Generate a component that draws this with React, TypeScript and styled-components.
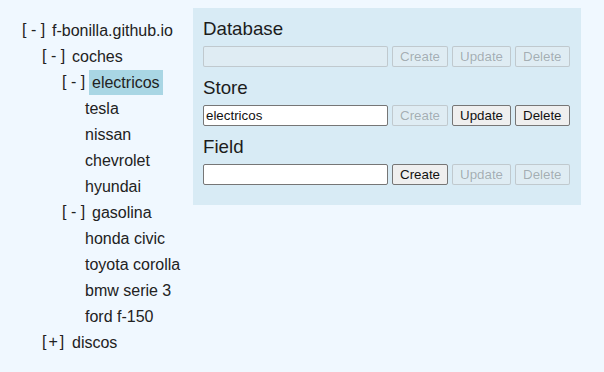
import styled, { createGlobalStyle } from 'styled-components';

interface TreeNode {
  name: string;
  open?: boolean;
  children?: TreeNode[];
}

const tree: TreeNode = {
  name: 'f-bonilla.github.io',
  open: true,
  children: [
    {
      name: 'coches',
      open: true,
      children: [
        {
          name: 'electricos',
          open: true,
          children: [{ name: 'tesla' }, { name: 'nissan' }, { name: 'chevrolet' }, { name: 'hyundai' }],
        },
        {
          name: 'gasolina',
          open: true,
          children: [
            { name: 'honda civic' },
            { name: 'toyota corolla' },
            { name: 'bmw serie 3' },
            { name: 'ford f-150' },
          ],
        },
      ],
    },
    { name: 'discos', open: false, children: [] },
  ],
};

const selected = 'electricos';

const GlobalStyle = createGlobalStyle`
  html, body {
    margin: 0;
    background: #f0f8ff;
  }
  body {
    font-family: "Liberation Sans", Arial, sans-serif;
    color: #222;
  }
`;

const Page = styled.div`
  display: flex;
  align-items: flex-start;
  padding: 8px;
`;

const TreeColumn = styled.div`
  width: 185px;
  box-sizing: border-box;
  padding: 9px 0 0 14px;
  flex-shrink: 0;
`;

const Branch = styled.ul<{ $root?: boolean }>`
  list-style: none;
  margin: 0;
  padding: 0 0 0 ${p => (p.$root ? 0 : 20)}px;
`;

const Row = styled.div`
  display: flex;
  align-items: center;
  height: 26px;
  font-size: 16px;
  line-height: 26px;
  white-space: nowrap;
`;

const Toggle = styled.span<{ $tight?: boolean }>`
  display: inline-block;
  width: 27px;
  letter-spacing: ${p => (p.$tight ? '2px' : '0')};
  color: #222;
`;

const Label = styled.span<{ $active?: boolean }>`
  display: inline-block;
  padding: 0 3px;
  height: 25px;
  line-height: 25px;
  margin-top: 1px;
  background: ${p => (p.$active ? '#a9d6e4' : 'transparent')};
`;

const Panel = styled.div`
  width: 388px;
  box-sizing: border-box;
  padding: 10px 10px 20px;
  background: #d8ebf5;
  display: flex;
  flex-direction: column;
  gap: 10px;
`;

const Section = styled.section`
  display: flex;
  flex-direction: column;
  gap: 6.5px;
`;

const Heading = styled.h3`
  margin: 0;
  font-size: 18.72px;
  line-height: 21.5px;
  font-weight: normal;
  color: #1c1c1c;
`;

const Controls = styled.div`
  display: flex;
  align-items: center;
  gap: 4px;
`;

const Field = styled.input`
  width: 185px;
  height: 21px;
  box-sizing: border-box;
  margin: 0;
  padding: 1px 2px;
  font: 13.33px "Liberation Sans", Arial, sans-serif;
  color: #111;
  background: #fff;
  border: 1px solid #767676;
  border-radius: 2px;

  &:disabled {
    background: rgba(239, 239, 239, 0.3);
    border-color: rgba(118, 118, 118, 0.3);
  }
`;

const Action = styled.button`
  height: 21px;
  box-sizing: border-box;
  margin: 0;
  padding: 1px 7px;
  font: 13.33px "Liberation Sans", Arial, sans-serif;
  color: #111;
  background: #efefef;
  border: 1px solid #767676;
  border-radius: 2px;

  &:disabled {
    color: rgba(16, 16, 16, 0.3);
    background: rgba(239, 239, 239, 0.3);
    border-color: rgba(118, 118, 118, 0.3);
  }
`;

const TreeItem = ({ node }: { node: TreeNode }) => {
  const isBranch = !!node.children;
  return (
    <li>
      <Row>
        {isBranch && <Toggle $tight={!node.open}>{node.open ? '[ - ]' : '[+]'}</Toggle>}
        <Label $active={node.name === selected}>{node.name}</Label>
      </Row>
      {isBranch && node.open && (
        <Branch>
          {node.children!.map(c => (
            <TreeItem key={c.name} node={c} />
          ))}
        </Branch>
      )}
    </li>
  );
};

interface SectionProps {
  title: string;
  value?: string;
  inputDisabled?: boolean;
  can: [boolean, boolean, boolean];
}

const EditSection = ({ title, value, inputDisabled, can }: SectionProps) => (
  <Section>
    <Heading>{title}</Heading>
    <Controls>
      <Field type="text" defaultValue={value} disabled={inputDisabled} />
      <Action disabled={!can[0]}>Create</Action>
      <Action disabled={!can[1]}>Update</Action>
      <Action disabled={!can[2]}>Delete</Action>
    </Controls>
  </Section>
);

const App = () => (
  <>
    <GlobalStyle />
    <Page>
      <TreeColumn>
        <Branch $root>
          <TreeItem node={tree} />
        </Branch>
      </TreeColumn>
      <Panel>
        <EditSection title="Database" inputDisabled can={[false, false, false]} />
        <EditSection title="Store" value="electricos" can={[false, true, true]} />
        <EditSection title="Field" can={[true, false, false]} />
      </Panel>
    </Page>
  </>
);

export default App;
